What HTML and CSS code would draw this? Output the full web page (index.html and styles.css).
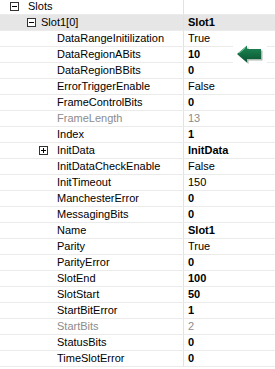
FILE: index.html
```html
<!DOCTYPE html>
<html>
    <head>
        <meta charset="utf-8">
        <title>Slots</title>
        <link rel="stylesheet" href="styles.css">
    </head>
    <body>
        <div id="grid">
            <div class="row">
                <div class="name lvl0"><span class="box minus"></span>Slots</div>
                <div class="val"></div>
            </div>
            <div class="row sel">
                <div class="name lvl1"><span class="box minus"></span>Slot1[0]</div>
                <div class="val b">Slot1</div>
            </div>
            <div class="row"><div class="name">DataRangeInitilization</div><div class="val">True</div></div>
            <div class="row"><div class="name">DataRegionABits</div><div class="val b">10</div></div>
            <div class="row"><div class="name">DataRegionBBits</div><div class="val b">0</div></div>
            <div class="row"><div class="name">ErrorTriggerEnable</div><div class="val">False</div></div>
            <div class="row"><div class="name">FrameControlBits</div><div class="val b">0</div></div>
            <div class="row ro"><div class="name">FrameLength</div><div class="val">13</div></div>
            <div class="row"><div class="name">Index</div><div class="val b">1</div></div>
            <div class="row"><div class="name"><span class="box plus"></span>InitData</div><div class="val b">InitData</div></div>
            <div class="row"><div class="name">InitDataCheckEnable</div><div class="val">False</div></div>
            <div class="row"><div class="name">InitTimeout</div><div class="val">150</div></div>
            <div class="row"><div class="name">ManchesterError</div><div class="val b">0</div></div>
            <div class="row"><div class="name">MessagingBits</div><div class="val b">0</div></div>
            <div class="row"><div class="name">Name</div><div class="val b">Slot1</div></div>
            <div class="row"><div class="name">Parity</div><div class="val">True</div></div>
            <div class="row"><div class="name">ParityError</div><div class="val b">0</div></div>
            <div class="row"><div class="name">SlotEnd</div><div class="val b">100</div></div>
            <div class="row"><div class="name">SlotStart</div><div class="val b">50</div></div>
            <div class="row"><div class="name">StartBitError</div><div class="val b">1</div></div>
            <div class="row ro"><div class="name">StartBits</div><div class="val">2</div></div>
            <div class="row"><div class="name">StatusBits</div><div class="val b">0</div></div>
            <div class="row"><div class="name">TimeSlotError</div><div class="val b">0</div></div>

            <!-- pointer arrow pasted over the grid -->
            <svg id="arrow" width="34" height="25" viewBox="0 0 34 25">
                <defs>
                    <linearGradient id="g" x1="0" y1="0" x2="0" y2="1">
                        <stop offset="0" stop-color="#1e8a55"/>
                        <stop offset="1" stop-color="#0a5331"/>
                    </linearGradient>
                </defs>
                <rect x="0" y="0" width="34" height="25" fill="#fff"/>
                <path d="M4 13 L14 4.5 L14 8 L28 8 L28 18 L14 18 L14 21.5 Z" fill="#aeb8b2" transform="translate(1.5 1.5)"/>
                <path d="M4 13 L14 4.5 L14 8 L28 8 L28 18 L14 18 L14 21.5 Z" fill="url(#g)"/>
                <path d="M6 12.2 L12.5 6.8" stroke="#6cc395" stroke-width="1"/>
            </svg>
        </div>
    </body>
</html>
```

FILE: styles.css
```css
body,html{
    margin:0px;
    padding:0px;
    background:#fff;
}
#grid{
    position:relative;
    font-family:"Liberation Sans",Arial,sans-serif;
    font-size:11px;
    color:#000;
    margin-top:-1px;
}
.row{
    display:grid;
    grid-template-columns:184px 1fr;
    height:15px;
    line-height:15px;
    border-bottom:1px solid #ebebeb;
}
.row.sel{
    background:#e6e6e6;
}
.row.ro{
    color:#8c8c8c;
}
.name{
    padding-left:57px;
    border-right:1px solid #e2e2e2;
    white-space:nowrap;
    overflow:hidden;
    position:relative;
}
.name.lvl0{
    padding-left:28px;
}
.name.lvl1{
    padding-left:41px;
}
.val{
    padding-left:4px;
    white-space:nowrap;
}
.b{
    font-weight:bold;
}
.box{
    position:absolute;
    top:3px;
    left:39px;
    width:7px;
    height:7px;
    border:1px solid #333;
    background:#fff;
}
.lvl0 .box{
    left:10px;
}
.lvl1 .box{
    left:27px;
}
.box::before{
    content:"";
    position:absolute;
    left:1px;
    top:3px;
    width:5px;
    height:1px;
    background:#000;
}
.box.plus::after{
    content:"";
    position:absolute;
    left:3px;
    top:1px;
    width:1px;
    height:5px;
    background:#000;
}
#arrow{
    position:absolute;
    left:233px;
    top:42px;
}
```
